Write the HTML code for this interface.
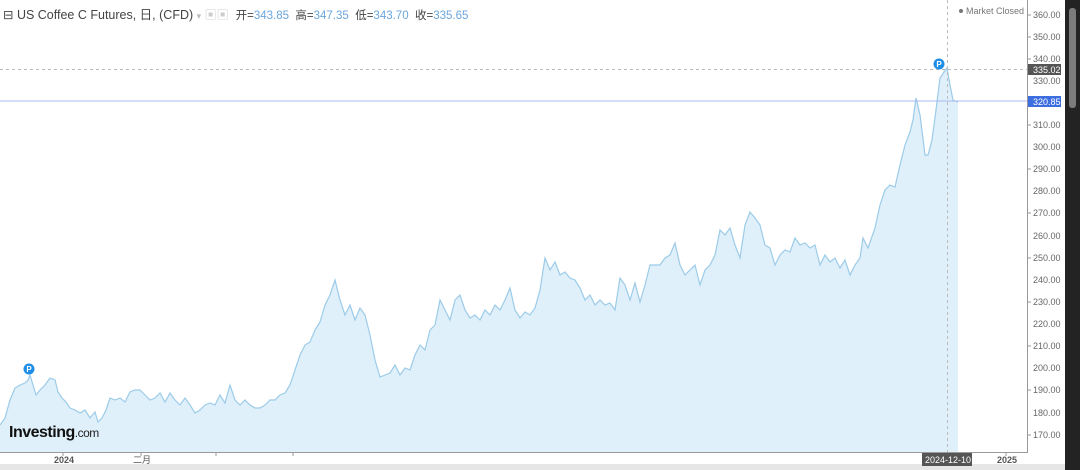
<!DOCTYPE html>
<html><head><meta charset="utf-8"><style>
body{margin:0;width:1080px;height:470px;overflow:hidden;background:#fff;font-family:"Liberation Sans","Noto Sans CJK SC",sans-serif;position:relative}
.t{position:absolute;white-space:nowrap}
</style></head><body>
<svg width="1080" height="470" style="position:absolute;left:0;top:0">
<rect x="0" y="464" width="1065" height="6" fill="#e6e6e6"/>
<rect x="1065" y="0" width="15" height="470" fill="#232323"/>
<rect x="1069" y="8" width="7" height="100" rx="3" fill="#7c7c7c"/>
<polygon fill="#dff0fa" stroke="none" points="0,452 0,425 5,418 10,400 15,388 20,385 25,383 28,380 30,375 33,385 36,395 40,390 45,385 50,378 55,380 58,392 62,398 66,402 70,408 75,410 80,413 85,410 90,418 95,412 98,422 102,418 106,410 110,398 115,400 120,398 125,402 130,392 135,390 140,390 145,395 150,400 155,398 160,393 165,402 170,393 175,400 180,405 185,398 190,405 195,413 200,410 205,405 210,403 215,405 220,395 225,403 230,385 235,400 240,405 245,400 250,405 255,408 260,408 265,405 270,400 275,400 280,395 285,393 290,385 295,370 300,355 305,345 310,342 315,330 320,322 325,305 330,295 335,280 340,300 345,315 350,305 355,320 360,308 365,315 370,335 375,360 380,377 385,375 390,373 395,365 400,375 405,368 410,370 415,355 420,345 425,350 430,330 435,325 440,300 445,310 450,320 455,300 460,295 465,310 470,318 475,315 480,320 485,310 490,315 495,305 500,310 505,300 510,288 515,310 520,318 525,312 530,315 535,308 540,290 545,258 550,270 555,262 560,275 565,272 570,278 575,280 580,288 585,300 590,295 595,305 600,300 605,305 610,303 615,310 620,278 625,285 630,300 635,283 640,302 645,285 650,265 655,265 660,265 665,258 670,255 675,243 680,265 685,275 690,270 695,265 700,285 705,270 710,265 715,255 720,230 725,235 730,228 735,245 740,258 745,225 750,212 755,218 760,225 765,245 770,248 775,265 780,255 785,250 790,252 795,238 800,245 805,243 810,248 815,245 820,265 825,255 830,262 835,258 840,268 845,260 850,275 855,265 860,258 863,238 868,248 875,228 880,205 885,190 890,185 895,187 900,165 905,145 910,132 913,120 916,98 920,115 925,155 928,155 932,140 936,110 940,78 944,72 947,68 950,85 953,100 958,102 958,452"/>
<polyline fill="none" stroke="#9ccbe8" stroke-width="1.2" points="0,425 5,418 10,400 15,388 20,385 25,383 28,380 30,375 33,385 36,395 40,390 45,385 50,378 55,380 58,392 62,398 66,402 70,408 75,410 80,413 85,410 90,418 95,412 98,422 102,418 106,410 110,398 115,400 120,398 125,402 130,392 135,390 140,390 145,395 150,400 155,398 160,393 165,402 170,393 175,400 180,405 185,398 190,405 195,413 200,410 205,405 210,403 215,405 220,395 225,403 230,385 235,400 240,405 245,400 250,405 255,408 260,408 265,405 270,400 275,400 280,395 285,393 290,385 295,370 300,355 305,345 310,342 315,330 320,322 325,305 330,295 335,280 340,300 345,315 350,305 355,320 360,308 365,315 370,335 375,360 380,377 385,375 390,373 395,365 400,375 405,368 410,370 415,355 420,345 425,350 430,330 435,325 440,300 445,310 450,320 455,300 460,295 465,310 470,318 475,315 480,320 485,310 490,315 495,305 500,310 505,300 510,288 515,310 520,318 525,312 530,315 535,308 540,290 545,258 550,270 555,262 560,275 565,272 570,278 575,280 580,288 585,300 590,295 595,305 600,300 605,305 610,303 615,310 620,278 625,285 630,300 635,283 640,302 645,285 650,265 655,265 660,265 665,258 670,255 675,243 680,265 685,275 690,270 695,265 700,285 705,270 710,265 715,255 720,230 725,235 730,228 735,245 740,258 745,225 750,212 755,218 760,225 765,245 770,248 775,265 780,255 785,250 790,252 795,238 800,245 805,243 810,248 815,245 820,265 825,255 830,262 835,258 840,268 845,260 850,275 855,265 860,258 863,238 868,248 875,228 880,205 885,190 890,185 895,187 900,165 905,145 910,132 913,120 916,98 920,115 925,155 928,155 932,140 936,110 940,78 944,72 947,68 950,85 953,100 958,102"/>
<line x1="0" y1="101" x2="1027" y2="101" stroke="#a9b8f0" stroke-width="1"/>
<line x1="0" y1="69.5" x2="1027" y2="69.5" stroke="#bbb" stroke-dasharray="3,3"/>
<line x1="947.5" y1="0" x2="947.5" y2="452" stroke="#bbb" stroke-dasharray="3,3"/>
<line x1="1027.5" y1="0" x2="1027.5" y2="452" stroke="#999"/>
<line x1="0" y1="452.5" x2="1028" y2="452.5" stroke="#999"/>
<g stroke="#999">
<line x1="63" y1="452" x2="63" y2="456"/><line x1="141" y1="452" x2="141" y2="456"/><line x1="216" y1="452" x2="216" y2="456"/><line x1="293" y1="452" x2="293" y2="456"/><line x1="1006" y1="452" x2="1006" y2="456"/>
</g>
<circle cx="29" cy="369" r="5.5" fill="#1f8ee8"/><text x="29" y="372" font-size="8" fill="#fff" text-anchor="middle" font-family="Liberation Sans" font-weight="bold">P</text>
<circle cx="939" cy="64" r="5.5" fill="#1f8ee8"/><text x="939" y="67" font-size="8" fill="#fff" text-anchor="middle" font-family="Liberation Sans" font-weight="bold">P</text>
<g font-size="9" fill="#666" font-family="Liberation Sans">
<text x="1033" y="18">360.00</text><text x="1033" y="40">350.00</text><text x="1033" y="62">340.00</text><text x="1033" y="84">330.00</text><text x="1033" y="128">310.00</text><text x="1033" y="150">300.00</text><text x="1033" y="172">290.00</text><text x="1033" y="194">280.00</text><text x="1033" y="216">270.00</text><text x="1033" y="239">260.00</text><text x="1033" y="261">250.00</text><text x="1033" y="283">240.00</text><text x="1033" y="305">230.00</text><text x="1033" y="327">220.00</text><text x="1033" y="349">210.00</text><text x="1033" y="371">200.00</text><text x="1033" y="393">190.00</text><text x="1033" y="416">180.00</text><text x="1033" y="438">170.00</text>
</g>
<g stroke="#999"><line x1="1028" y1="15" x2="1031" y2="15"/><line x1="1028" y1="37" x2="1031" y2="37"/><line x1="1028" y1="59" x2="1031" y2="59"/><line x1="1028" y1="125" x2="1031" y2="125"/><line x1="1028" y1="169" x2="1031" y2="169"/><line x1="1028" y1="213" x2="1031" y2="213"/><line x1="1028" y1="258" x2="1031" y2="258"/><line x1="1028" y1="302" x2="1031" y2="302"/><line x1="1028" y1="346" x2="1031" y2="346"/><line x1="1028" y1="390" x2="1031" y2="390"/><line x1="1028" y1="435" x2="1031" y2="435"/></g>
<rect x="1028" y="64" width="33" height="11" fill="#555"/><text x="1033" y="73" font-size="9" fill="#fff" font-family="Liberation Sans">335.02</text>
<rect x="1028" y="96" width="33" height="11" fill="#3d6ee0"/><text x="1033" y="105" font-size="9" fill="#fff" font-family="Liberation Sans">320.85</text>
<rect x="922" y="453" width="50" height="13" fill="#555"/><text x="925" y="463" font-size="9" fill="#fff" font-family="Liberation Sans">2024-12-10</text>
<text x="997" y="463" font-size="9" fill="#555" font-family="Liberation Sans" font-weight="bold">2025</text>
<text x="54" y="463" font-size="9" fill="#555" font-family="Liberation Sans" font-weight="bold">2024</text>
<text x="133" y="463" font-size="9" fill="#555" font-family="Noto Sans CJK SC">二月</text>
<circle cx="961" cy="11" r="2" fill="#777"/>
<text x="966" y="14" font-size="9" fill="#777" font-family="Liberation Sans">Market Closed</text>
</svg>
<div class="t" style="left:3px;top:4px;font-size:12.5px;color:#444">⊟ US Coffee C Futures, 日, (CFD) <span style="color:#bbb;font-size:9px">▾</span> <span style="color:#ccc;font-size:12px">▣▣</span>&nbsp; <span style="font-size:11.5px">开=<span style="color:#6aa6dc">343.85</span>&nbsp; 高=<span style="color:#6aa6dc">347.35</span>&nbsp; 低=<span style="color:#6aa6dc">343.70</span>&nbsp; 收=<span style="color:#6aa6dc">335.65</span></span></div>
<div class="t" style="left:9px;top:424px;font-size:16px;font-weight:bold;color:#111;letter-spacing:-0.5px">Investing<span style="font-weight:normal;font-size:12px;color:#222">.com</span></div>
</body></html>
